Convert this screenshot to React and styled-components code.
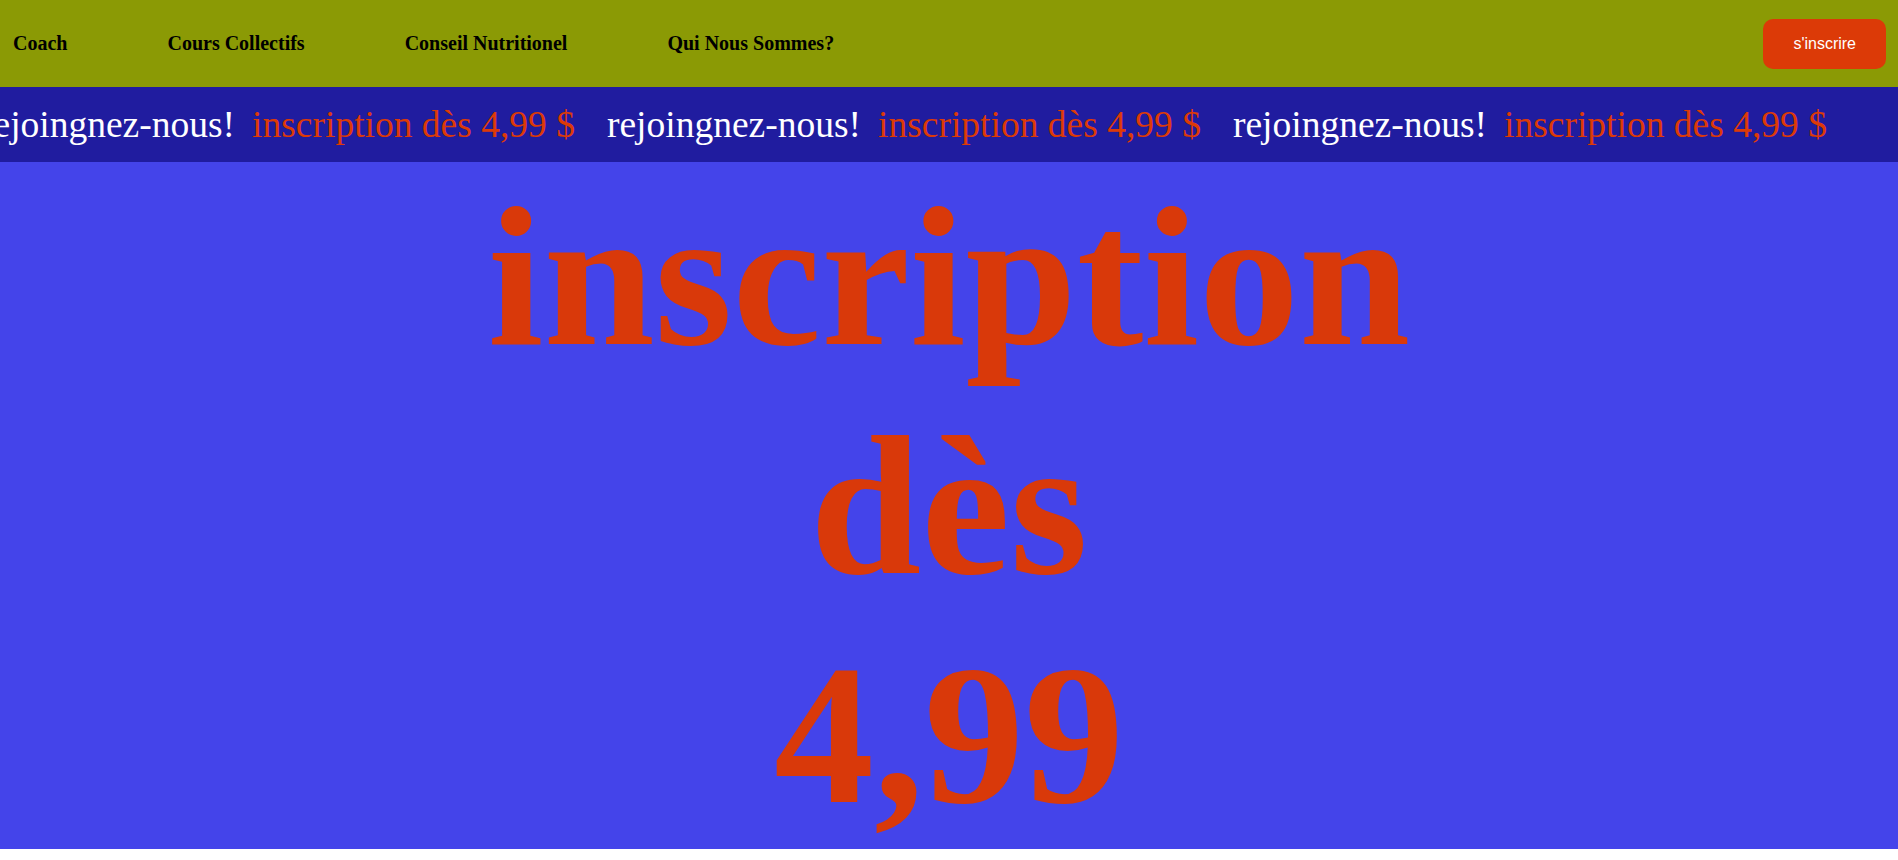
import React from 'react';
import styled, { createGlobalStyle } from 'styled-components';

const GlobalStyle = createGlobalStyle`
  * {
    box-sizing: border-box;
  }
  body {
    margin: 0;
    background: #ffffff;
    font-family: 'Liberation Serif', 'Times New Roman', serif;
  }
`;

const Navbar = styled.nav`
  display: flex;
  align-items: center;
  justify-content: space-between;
  height: 87px;
  padding: 0 12px 0 13px;
  background-color: #8b9a05;
`;

const Links = styled.ul`
  display: flex;
  align-items: center;
  gap: 100px;
  margin: 0;
  padding: 0;
  list-style: none;
`;

const LinkItem = styled.li`
  font-family: 'Liberation Serif', 'Times New Roman', serif;
  font-weight: bold;
  font-size: 20px;
  color: #000000;
  cursor: pointer;
`;

const SignupButton = styled.button`
  height: 50px;
  padding: 0 30px;
  border: none;
  border-radius: 10px;
  background-color: #dc3a07;
  color: #ffffff;
  font-family: 'Liberation Sans', Arial, sans-serif;
  font-size: 16px;
  cursor: pointer;
`;

const Band = styled.div`
  height: 75px;
  display: flex;
  align-items: center;
  overflow: hidden;
  background-color: #201c9f;
`;

const Track = styled.div`
  display: flex;
  align-items: center;
  white-space: nowrap;
  transform: translateX(-19px);
`;

const Item = styled.div`
  display: flex;
  align-items: center;
  gap: 17px;
  padding-right: 32px;
  font-family: 'Liberation Serif', 'Times New Roman', serif;
  font-size: 37.5px;
`;

const Word = styled.span`
  color: ${(p) => (p.$accent ? '#dc3a07' : '#ffffff')};
`;

const Hero = styled.section`
  background-color: #4444ea;
`;

const Headline = styled.h1`
  display: flex;
  flex-direction: column;
  align-items: center;
  margin: 0;
  font-family: 'Liberation Serif', 'Times New Roman', serif;
  font-weight: bold;
  font-size: 200px;
  color: #d9390a;
`;

const links = ['Coach', 'Cours Collectifs', 'Conseil Nutritionel', 'Qui Nous Sommes?'];
const headline = 'inscription dès 4,99';

const App = () => {
  return (
    <>
      <GlobalStyle />
      <Navbar>
        <Links>
          {links.map((l) => (
            <LinkItem key={l}>{l}</LinkItem>
          ))}
        </Links>
        <SignupButton>s'inscrire</SignupButton>
      </Navbar>
      <Band>
        <Track>
          {[0, 1, 2].map((i) => (
            <Item key={i}>
              <Word>rejoingnez-nous!</Word>
              <Word $accent>inscription dès 4,99 $</Word>
            </Item>
          ))}
        </Track>
      </Band>
      <Hero>
        <Headline>
          {headline.split(' ').map((w) => (
            <span key={w}>{w}</span>
          ))}
        </Headline>
      </Hero>
    </>
  );
};

export default App;
